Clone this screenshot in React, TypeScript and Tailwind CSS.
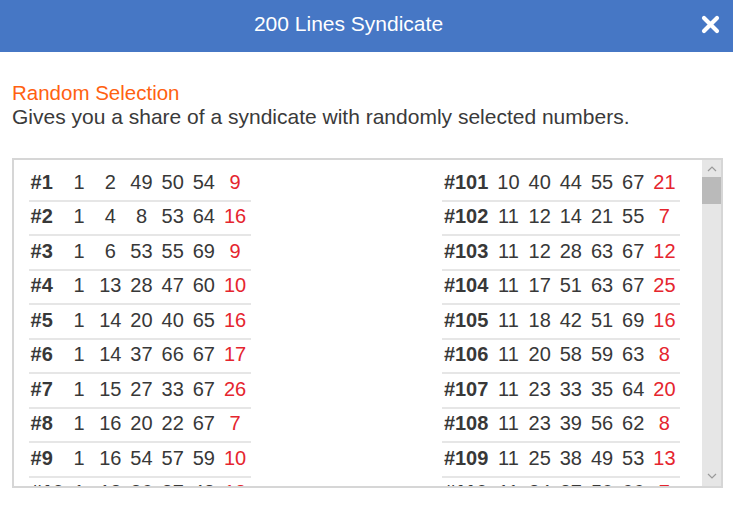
import type { FC } from 'react';

type Line = { id: number; nums: number[]; bonus: number };

const leftLines: Line[] = [
  { id: 1, nums: [1, 2, 49, 50, 54], bonus: 9 },
  { id: 2, nums: [1, 4, 8, 53, 64], bonus: 16 },
  { id: 3, nums: [1, 6, 53, 55, 69], bonus: 9 },
  { id: 4, nums: [1, 13, 28, 47, 60], bonus: 10 },
  { id: 5, nums: [1, 14, 20, 40, 65], bonus: 16 },
  { id: 6, nums: [1, 14, 37, 66, 67], bonus: 17 },
  { id: 7, nums: [1, 15, 27, 33, 67], bonus: 26 },
  { id: 8, nums: [1, 16, 20, 22, 67], bonus: 7 },
  { id: 9, nums: [1, 16, 54, 57, 59], bonus: 10 },
  { id: 10, nums: [1, 18, 26, 27, 48], bonus: 18 },
];

const rightLines: Line[] = [
  { id: 101, nums: [10, 40, 44, 55, 67], bonus: 21 },
  { id: 102, nums: [11, 12, 14, 21, 55], bonus: 7 },
  { id: 103, nums: [11, 12, 28, 63, 67], bonus: 12 },
  { id: 104, nums: [11, 17, 51, 63, 67], bonus: 25 },
  { id: 105, nums: [11, 18, 42, 51, 69], bonus: 16 },
  { id: 106, nums: [11, 20, 58, 59, 63], bonus: 8 },
  { id: 107, nums: [11, 23, 33, 35, 64], bonus: 20 },
  { id: 108, nums: [11, 23, 39, 56, 62], bonus: 8 },
  { id: 109, nums: [11, 25, 38, 49, 53], bonus: 13 },
  { id: 110, nums: [11, 24, 27, 50, 66], bonus: 7 },
];

const LinesTable: FC<{ lines: Line[]; wide?: boolean }> = ({ lines, wide }) => (
  <div className="flex flex-col">
    {lines.map((line) => (
      <div
        key={line.id}
        className="flex h-[34.5px] shrink-0 items-center border-b-2 border-[#e6e6e6] pb-[3px] text-[20px] text-[#383838]"
      >
        <span className={`${wide ? 'w-[50.5px]' : 'w-[34.5px]'} pl-[1.5px] font-bold`}>#{line.id}</span>
        {line.nums.map((n, i) => (
          <span key={i} className="w-[31.2px] text-center">
            {n}
          </span>
        ))}
        <span className="w-[31.2px] text-center text-[#e5252e]">{line.bonus}</span>
      </div>
    ))}
  </div>
);

export default function App() {
  return (
    <div className="h-[505px] w-[733px] overflow-hidden bg-white font-['Liberation_Sans',Arial,sans-serif]">
      {/* Header */}
      <div className="relative flex h-[52px] items-center justify-center bg-[#4677c5] pb-[5px] pr-[36px]">
        <span className="text-[21px] text-white">200 Lines Syndicate</span>
        <svg
          className="absolute right-[13px] top-[15px]"
          width="19"
          height="19"
          viewBox="0 0 19 19"
        >
          <path d="M3 3 L16 16 M16 3 L3 16" stroke="white" strokeWidth="4.2" strokeLinecap="round" />
        </svg>
      </div>

      {/* Body */}
      <div className="pl-[12px] pr-[10px]">
        <div className="mt-[29px] text-[20.5px] leading-[24px] text-[#ff6111]">Random Selection</div>
        <div className="text-[21px] leading-[24px] text-[#3a3a3a]">
          Gives you a share of a syndicate with randomly selected numbers.
        </div>

        <div className="mt-[29px] flex h-[330px] border-2 border-[#d6d6d6]">
          <div className="flex flex-1 justify-between overflow-hidden pl-[15px] pr-[22px] pt-[7px]">
            <LinesTable lines={leftLines} />
            <LinesTable lines={rightLines} wide />
          </div>

          {/* Scrollbar */}
          <div className="flex w-[19px] flex-col bg-[#e6e6e6]">
            <div className="flex h-[17px] items-center justify-center">
              <svg width="10" height="6" viewBox="0 0 10 6">
                <path d="M1 5 L5 1 L9 5" fill="none" stroke="#9a9a9a" strokeWidth="1.2" />
              </svg>
            </div>
            <div className="h-[27px] bg-[#bababa]" />
            <div className="flex-1" />
            <div className="flex h-[20px] items-center justify-center">
              <svg width="10" height="6" viewBox="0 0 10 6">
                <path d="M1 1 L5 5 L9 1" fill="none" stroke="#9a9a9a" strokeWidth="1.2" />
              </svg>
            </div>
          </div>
        </div>
      </div>
    </div>
  );
}
